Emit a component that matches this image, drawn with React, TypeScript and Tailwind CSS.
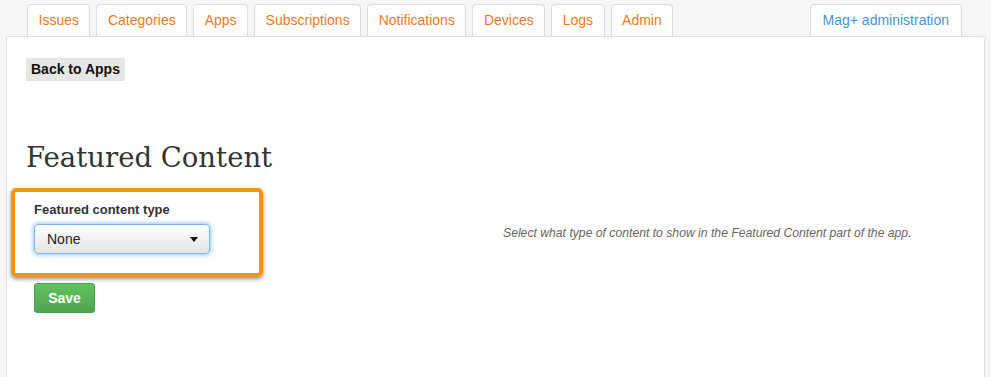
const tabs = ["Issues", "Categories", "Apps", "Subscriptions", "Notifications", "Devices", "Logs", "Admin"];

export default function App() {
  return (
    <div className="h-[377px] w-[991px] overflow-hidden bg-[#f6f6f6] font-['Liberation_Sans',Arial,sans-serif]">
      {/* tabs */}
      <div className="flex h-[36px] items-end pl-[27px] pr-[29px] pt-[4px]">
        <div className="flex gap-[6px]">
          {tabs.map((t) => (
            <div
              key={t}
              className="flex h-[32px] items-center rounded-t-[4px] border border-b-0 border-[#dcdcdc] bg-white px-[10.5px] text-[14px] text-[#ec7a26]"
            >
              {t}
            </div>
          ))}
        </div>
        <div className="ml-auto flex h-[32px] items-center rounded-t-[4px] border border-b-0 border-[#dcdcdc] bg-white px-[12px] text-[14px] text-[#4996cf]">
          Mag+ administration
        </div>
      </div>

      {/* panel */}
      <div className="ml-[6px] mr-[6px] h-[360px] rounded-tr-[3px] border border-[#e0e0e0] bg-white pl-[19px] pt-[20px]">
        <div className="inline-block bg-[#e6e6e6] px-[5px] py-[3px] text-[14px] leading-[17px] font-bold text-[#111]">
          Back to Apps
        </div>

        <h1 className="mt-[58px] font-['DejaVu_Serif',Georgia,serif] text-[27.5px] leading-[36px] text-[#333]">
          Featured Content
        </h1>

        <div className="mt-[13px] flex">
          <div className="-ml-[15px] h-[89px] w-[252px] rounded-[5px] border-[4px] border-[#f39418] pl-[19px] pt-[10px] shadow-[0_2px_4px_rgba(0,0,0,0.45)]">
            <div className="text-[13px] leading-[16px] font-bold text-[#333]">Featured content type</div>
            <div className="mt-[6px] flex h-[30px] w-[176px] items-center justify-between rounded-[4px] border border-[#7db6ec] bg-gradient-to-b from-white to-[#e4e4e4] pl-[12px] pr-[11px] text-[14px] text-[#222] shadow-[0_0_4px_1px_rgba(102,175,233,0.7)]">
              <span>None</span>
              <svg width="8" height="5" viewBox="0 0 8 5">
                <path d="M0 0h8L4 5z" fill="#111" />
              </svg>
            </div>
          </div>
          <div className="ml-[240px] mt-[36px] text-[12.2px] italic text-[#666]">
            Select what type of content to show in the Featured Content part of the app.
          </div>
        </div>

        <button className="mt-[6px] ml-[8px] h-[30px] w-[61px] rounded-[3px] border border-[#4a9d4a] bg-gradient-to-b from-[#62c462] to-[#51a351] text-[14px] font-bold text-white">
          Save
        </button>
      </div>
    </div>
  );
}
